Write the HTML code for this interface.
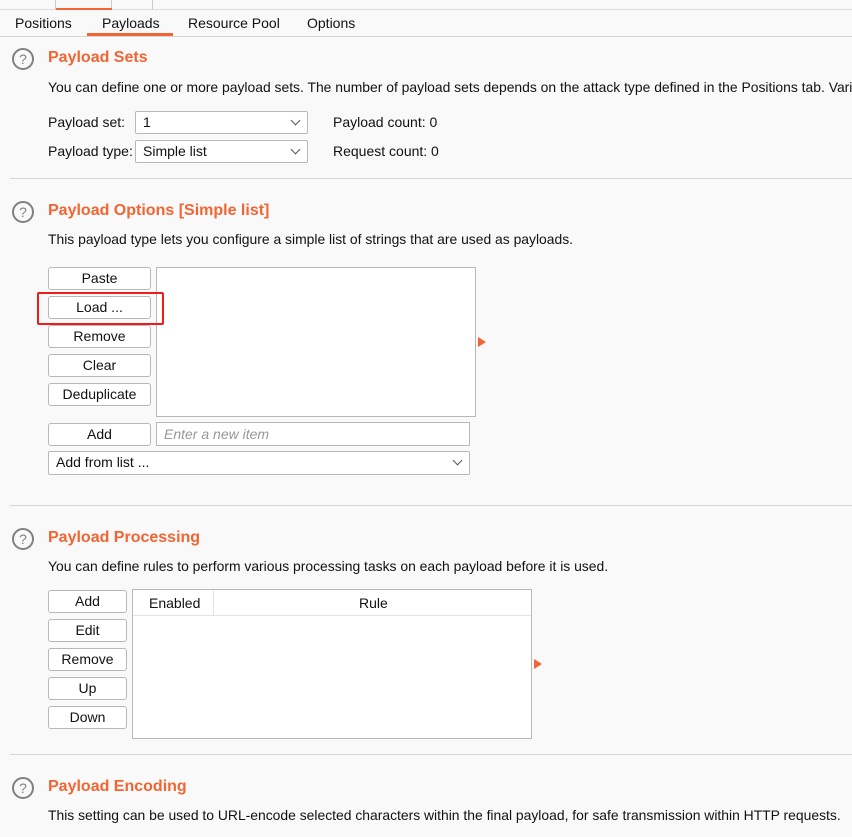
<!DOCTYPE html>
<html><head><meta charset="utf-8"><style>
*{box-sizing:border-box;margin:0;padding:0}
body{width:852px;height:837px;overflow:hidden;background:#f9f9f9;font-family:"Liberation Sans","Noto Sans CJK SC",sans-serif;font-size:14px;color:#111;position:relative}
.a{position:absolute;white-space:nowrap}
.d{font-size:13.9px}
.t{font-weight:bold;color:#f26532;font-size:16px}
.sep{position:absolute;left:10px;right:0;height:1px;background:#d6d6d6}
.btn{position:absolute;background:#fff;border:1px solid #b8b8b8;border-radius:3px;text-align:center;font-size:14px;line-height:21px}
.box{position:absolute;background:#fff;border:1px solid #b8b8b8}
.sel{position:absolute;background:#fff;border:1px solid #b8b8b8;border-radius:2px;padding-left:7px;line-height:21px}
.sel:after{content:"";position:absolute;right:8px;top:5px;width:6px;height:6px;border-right:1px solid #555;border-bottom:1px solid #555;transform:rotate(45deg)}
.help{position:absolute;width:22px;height:22px;border:2px solid #808080;border-radius:50%;text-align:center;font-size:14px;line-height:18px;color:#808080}
.arr{position:absolute;width:0;height:0;border-left:8px solid #f26532;border-top:5px solid transparent;border-bottom:5px solid transparent}
</style></head><body>
<div class="a" style="left:0;top:0;width:852px;height:10px;background:#f9f9f9;border-bottom:1px solid #ddd"></div>
<div class="a" style="left:55px;top:0;width:1px;height:10px;background:#ccc"></div>
<div class="a" style="left:111px;top:0;width:1px;height:10px;background:#ccc"></div>
<div class="a" style="left:152px;top:0;width:1px;height:10px;background:#ccc"></div>
<div class="a" style="left:56px;top:0;width:56px;height:10px;border-bottom:2px solid #f26532"></div>
<div class="a" style="left:15px;top:15px">Positions</div>
<div class="a" style="left:102px;top:15px">Payloads</div>
<div class="a" style="left:188px;top:15px">Resource Pool</div>
<div class="a" style="left:307px;top:15px">Options</div>
<div class="a" style="left:87px;top:33px;width:86px;height:3px;background:#f26532"></div>
<div class="a" style="left:0;top:36px;width:852px;height:1px;background:#d6d6d6"></div>

<div class="help" style="left:12px;top:48px">?</div>
<div class="a t" style="left:48px;top:49px">Payload Sets</div>
<div class="a d" style="left:48px;top:79px">You can define one or more payload sets. The number of payload sets depends on the attack type defined in the Positions tab. Various</div>
<div class="a" style="left:48px;top:114px">Payload set:</div>
<div class="sel" style="left:135px;top:111px;width:173px;height:23px">1</div>
<div class="a" style="left:333px;top:114px">Payload count: 0</div>
<div class="a" style="left:48px;top:143px">Payload type:</div>
<div class="sel" style="left:135px;top:140px;width:173px;height:23px">Simple list</div>
<div class="a" style="left:333px;top:143px">Request count: 0</div>
<div class="sep" style="top:178px"></div>

<div class="help" style="left:12px;top:201px">?</div>
<div class="a t" style="left:48px;top:202px">Payload Options [Simple list]</div>
<div class="a d" style="left:48px;top:231px">This payload type lets you configure a simple list of strings that are used as payloads.</div>
<div class="btn" style="left:48px;top:267px;width:103px;height:23px">Paste</div>
<div class="btn" style="left:48px;top:296px;width:103px;height:23px">Load ...</div>
<div class="btn" style="left:48px;top:325px;width:103px;height:23px">Remove</div>
<div class="btn" style="left:48px;top:354px;width:103px;height:23px">Clear</div>
<div class="btn" style="left:48px;top:383px;width:103px;height:23px">Deduplicate</div>
<div class="box" style="left:156px;top:267px;width:320px;height:150px"></div>
<div class="a" style="left:37px;top:292px;width:127px;height:33px;border:2px solid #ee1c1c;border-radius:2px"></div>
<div class="arr" style="left:478px;top:337px"></div>
<div class="btn" style="left:48px;top:423px;width:103px;height:23px">Add</div>
<div class="box" style="left:156px;top:422px;width:314px;height:24px;padding-left:7px;line-height:22px;color:#999;font-style:italic">Enter a new item</div>
<div class="sel" style="left:48px;top:451px;width:422px;height:24px">Add from list ...</div>
<div class="sep" style="top:505px"></div>

<div class="help" style="left:12px;top:528px">?</div>
<div class="a t" style="left:48px;top:529px">Payload Processing</div>
<div class="a d" style="left:48px;top:558px">You can define rules to perform various processing tasks on each payload before it is used.</div>
<div class="btn" style="left:48px;top:590px;width:79px;height:23px">Add</div>
<div class="btn" style="left:48px;top:619px;width:79px;height:23px">Edit</div>
<div class="btn" style="left:48px;top:648px;width:79px;height:23px">Remove</div>
<div class="btn" style="left:48px;top:677px;width:79px;height:23px">Up</div>
<div class="btn" style="left:48px;top:706px;width:79px;height:23px">Down</div>
<div class="box" style="left:132px;top:589px;width:400px;height:150px">
 <div class="a" style="left:0;top:0;width:398px;height:26px;border-bottom:1px solid #e4e4e4"></div>
 <div class="a" style="left:80px;top:0;width:1px;height:26px;background:#e4e4e4"></div>
 <div class="a" style="left:16px;top:5px">Enabled</div>
 <div class="a" style="left:226px;top:5px">Rule</div>
</div>
<div class="arr" style="left:534px;top:659px"></div>
<div class="sep" style="top:754px"></div>

<div class="help" style="left:12px;top:777px">?</div>
<div class="a t" style="left:48px;top:778px">Payload Encoding</div>
<div class="a d" style="left:48px;top:807px">This setting can be used to URL-encode selected characters within the final payload, for safe transmission within HTTP requests.</div>
</body></html>
